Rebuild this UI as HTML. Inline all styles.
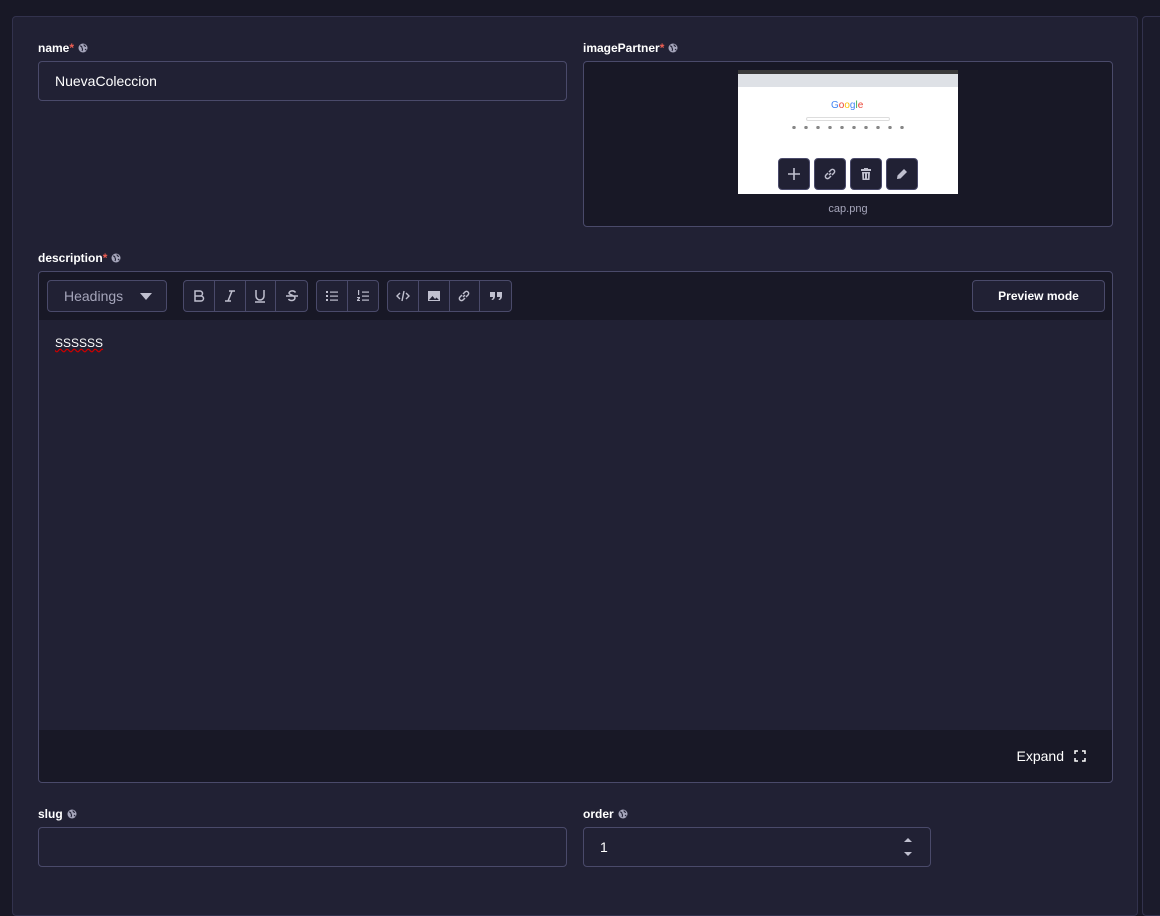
<!DOCTYPE html>
<html><head><style>
*{box-sizing:border-box;margin:0;padding:0}
body{width:1160px;height:876px;background:#181826;font-family:"Liberation Sans",sans-serif;overflow:hidden;position:relative;color:#fff}
.panel{position:absolute;left:12px;top:16px;width:1126px;height:900px;background:#212134;border:1px solid #32324d;border-radius:4px}
.side{position:absolute;left:1142px;top:16px;width:30px;height:900px;background:#1b1b2b;border:1px solid #32324d;border-radius:4px}
.lbl{position:absolute;font-size:12px;font-weight:bold;color:#fff;display:flex;align-items:center;gap:4px}
.lbl b{color:#ee5e52;font-weight:bold;margin-left:-4px}
.lbl svg{width:10px;height:10px}
.inp{position:absolute;border:1px solid #4a4a6a;border-radius:4px;background:#212134;font-size:14px;color:#fff;display:flex;align-items:center;padding-left:16px}
.btn{position:absolute;height:32px;border:1px solid #4a4a6a;border-radius:4px;background:#212134;display:flex;align-items:stretch}
.btn span{width:31px;border-right:1px solid #4a4a6a;display:flex;align-items:center;justify-content:center;color:#c0c0cf}
.btn span:last-child{border-right:none}
.btn svg{width:14px;height:14px}
.ib{position:absolute;top:158px;width:32px;height:32px;background:#212134;border:1px solid #4a4a6a;border-radius:4px;display:flex;align-items:center;justify-content:center}
.ib svg{width:14px;height:14px}
</style></head><body>
<svg width="0" height="0" style="position:absolute"><defs>
<symbol id="g" viewBox="0 0 10 10"><circle cx="5" cy="5" r="4.5" fill="#a5a5ba"/><path d="M2 3 Q4 3 4 5 Q5 6 4 8 M6 1.5 Q6 3 8 3.5 M7 6 Q8 7 8.5 7" stroke="#212134" stroke-width="1.1" fill="none"/></symbol>
</defs></svg>
<div class="panel"></div>
<div class="side"></div>

<div class="lbl" style="left:38px;top:41px">name<b>*</b><svg><use href="#g"/></svg></div>
<div class="inp" style="left:38px;top:61px;width:529px;height:40px">NuevaColeccion</div>

<div class="lbl" style="left:583px;top:41px">imagePartner<b>*</b><svg><use href="#g"/></svg></div>
<div style="position:absolute;left:583px;top:61px;width:530px;height:166px;background:#181826;border:1px solid #4a4a6a;border-radius:4px"></div>
<div style="position:absolute;left:738px;top:70px;width:220px;height:124px;background:#fff;overflow:hidden">
 <div style="height:4px;background:#3a3a3a"></div>
 <div style="height:13px;background:#dee1e6"></div>
 <div style="position:absolute;left:93px;top:30px;font-size:10px;color:#4285f4">G<span style="color:#ea4335">o</span><span style="color:#fbbc05">o</span>g<span style="color:#34a853">l</span><span style="color:#ea4335">e</span></div>
 <div style="position:absolute;left:68px;top:47px;width:84px;height:4px;border:1px solid #ddd;border-radius:3px"></div>
 <div style="position:absolute;left:50px;top:56px;width:120px;height:3px;background:radial-gradient(circle,#888 1.5px,transparent 2px) 0 0/12px 3px"></div>
</div>
<div class="ib" style="left:778px"><svg viewBox="0 0 14 14"><path d="M7 1v12M1 7h12" stroke="#c0c0cf" stroke-width="1.6"/></svg></div>
<div class="ib" style="left:814px"><svg viewBox="0 0 14 14" fill="none" stroke="#c0c0cf" stroke-width="1.5"><path d="M6 8l2-2M5 6L3 8a2 2 0 0 0 3 3l2-2M9 8l2-2a2 2 0 0 0-3-3L6 5"/></svg></div>
<div class="ib" style="left:850px"><svg viewBox="0 0 14 14" fill="#c0c0cf"><rect x="2" y="2" width="10" height="2"/><rect x="5" y="1" width="4" height="1.5"/><path d="M3 5h8l-.5 8h-7z"/><path d="M5.5 6.5v5M8.5 6.5v5" stroke="#212134" stroke-width="1"/></svg></div>
<div class="ib" style="left:886px"><svg viewBox="0 0 14 14" fill="#c0c0cf"><path d="M9 2l3 3-6.5 6.5-3.5.5.5-3.5z"/></svg></div>
<div style="position:absolute;left:583px;top:203px;width:530px;text-align:center;font-size:11px;color:#a5a5ba">cap.png</div>

<div class="lbl" style="left:38px;top:251px">description<b>*</b><svg><use href="#g"/></svg></div>
<div style="position:absolute;left:38px;top:271px;width:1075px;height:512px;border:1px solid #4a4a6a;border-radius:4px;background:#181826;overflow:hidden">
 <div style="position:absolute;left:0;top:48px;width:100%;height:410px;background:#212134"></div>
 <div style="position:absolute;left:16px;top:64px;font-size:12px;color:#fff;text-decoration:underline wavy #c00">SSSSSS</div>
 <div style="position:absolute;right:26px;top:476px;font-size:14px;color:#fff;display:flex;align-items:center;gap:10px">Expand <svg width="12" height="12" viewBox="0 0 12 12" fill="none" stroke="#fff" stroke-width="1.5"><path d="M1 4V1h3M8 1h3v3M11 8v3H8M4 11H1V8"/></svg></div>
</div>
<div class="btn" style="left:47px;top:280px;width:120px;align-items:center;padding-left:16px;color:#a5a5ba;font-size:14px">Headings<svg style="position:absolute;right:14px;top:12px;width:12px;height:7px" viewBox="0 0 12 7"><path d="M0 0h12L6 7z" fill="#c0c0cf"/></svg></div>
<div class="btn" style="left:183px;top:280px;width:125px">
<span><svg viewBox="0 0 14 14" fill="none" stroke="#c0c0cf" stroke-width="1.5"><path d="M3 2h5a2.5 2.5 0 0 1 0 5H3zM3 7h6a2.5 2.5 0 0 1 0 5H3z"/></svg></span>
<span><svg viewBox="0 0 14 14" fill="none" stroke="#c0c0cf" stroke-width="1.5"><path d="M6 2h6M2 12h6M9 2L5 12"/></svg></span>
<span><svg viewBox="0 0 14 14" fill="none" stroke="#c0c0cf" stroke-width="1.5"><path d="M3 1v6a4 4 0 0 0 8 0V1M2 13h10"/></svg></span>
<span><svg viewBox="0 0 14 14" fill="none" stroke="#c0c0cf" stroke-width="1.5"><path d="M10.5 3.5A3.5 3 0 0 0 4 4c0 2 6 2 6 5a3.5 3 0 0 1-6.5 1M1 7h12"/></svg></span></div>
<div class="btn" style="left:316px;top:280px;width:63px">
<span><svg viewBox="0 0 14 14" fill="#c0c0cf"><rect x="1" y="2" width="2" height="2"/><rect x="1" y="6" width="2" height="2"/><rect x="1" y="10" width="2" height="2"/><rect x="5" y="2.5" width="8" height="1.2"/><rect x="5" y="6.5" width="8" height="1.2"/><rect x="5" y="10.5" width="8" height="1.2"/></svg></span>
<span><svg viewBox="0 0 14 14" fill="#c0c0cf"><rect x="2" y="1" width="1.2" height="5"/><path d="M1 8h3v1.2L2.5 11H4v1H1v-1l1.5-2H1z"/><rect x="6" y="2.5" width="7" height="1.2"/><rect x="6" y="6.5" width="7" height="1.2"/><rect x="6" y="10.5" width="7" height="1.2"/></svg></span></div>
<div class="btn" style="left:387px;top:280px;width:125px">
<span><svg viewBox="0 0 14 14" fill="none" stroke="#c0c0cf" stroke-width="1.4"><path d="M4 4L1 7l3 3M10 4l3 3-3 3M8 2L6 12"/></svg></span>
<span><svg viewBox="0 0 14 14"><rect x="1" y="2" width="12" height="10" fill="#c0c0cf"/><path d="M2 11l3.5-4 2.5 3 1.5-1.5L12 11z" fill="#212134"/></svg></span>
<span><svg viewBox="0 0 14 14" fill="none" stroke="#c0c0cf" stroke-width="1.5"><path d="M6 8l2-2M5 6L3 8a2 2 0 0 0 3 3l2-2M9 8l2-2a2 2 0 0 0-3-3L6 5"/></svg></span>
<span><svg viewBox="0 0 14 14" fill="#c0c0cf"><path d="M1 3h5v4c0 2-1 4-3 4l-.5-1c1 0 1.5-1 1.5-2H1zM8 3h5v4c0 2-1 4-3 4l-.5-1c1 0 1.5-1 1.5-2H8z"/></svg></span></div>
<div class="btn" style="left:972px;top:280px;width:133px;justify-content:center;align-items:center;font-size:12px;font-weight:bold;color:#fff">Preview mode</div>

<div class="lbl" style="left:38px;top:807px">slug<svg><use href="#g"/></svg></div>
<div class="inp" style="left:38px;top:827px;width:529px;height:40px"></div>
<div class="lbl" style="left:583px;top:807px">order<svg><use href="#g"/></svg></div>
<div class="inp" style="left:583px;top:827px;width:348px;height:40px">1<svg style="position:absolute;right:17px;top:8px" width="10" height="22" viewBox="0 0 10 22" fill="#c0c0cf"><path d="M1 6l4-4 4 4zM1 16h8l-4 4z"/></svg></div>
</body></html>
